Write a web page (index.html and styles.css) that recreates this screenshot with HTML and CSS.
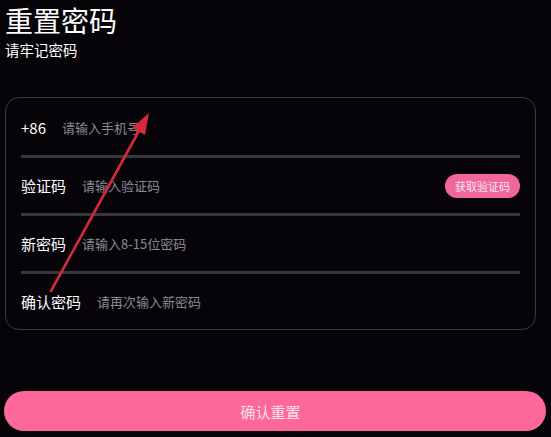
FILE: index.html
```html
<!DOCTYPE html>
<html lang="zh">
<head>
<meta charset="utf-8">
<link rel="stylesheet" href="styles.css">
</head>
<body>
<div class="page">
  <header class="head">
    <h1 class="title">重置密码</h1>
    <p class="subtitle">请牢记密码</p>
  </header>
  <section class="card">
    <div class="row first">
      <span class="label">+86</span>
      <span class="ph">请输入手机号</span>
    </div>
    <div class="divider"></div>
    <div class="row">
      <span class="label">验证码</span>
      <span class="ph">请输入验证码</span>
      <span class="code-btn">获取验证码</span>
    </div>
    <div class="divider"></div>
    <div class="row">
      <span class="label">新密码</span>
      <span class="ph">请输入8-15位密码</span>
    </div>
    <div class="divider"></div>
    <div class="row">
      <span class="label">确认密码</span>
      <span class="ph">请再次输入新密码</span>
    </div>
  </section>
  <div class="submit">确认重置</div>
  <svg class="arrow" width="551" height="437" viewBox="0 0 551 437">
    <line x1="51" y1="291" x2="140" y2="129" stroke="#d42a3c" stroke-width="2.6" stroke-linecap="round"/>
    <polygon points="149,113 145,135 132,128" fill="#d42a3c"/>
  </svg>
</div>
</body>
</html>
```
FILE: styles.css
```css
html, body {
  margin: 0;
  padding: 0;
  background: #060409;
}
body {
  font-family: "Noto Sans CJK SC", "Noto Sans", sans-serif;
  color: #ffffff;
}
.page {
  position: relative;
  width: 551px;
  height: 437px;
  overflow: hidden;
}
.head {
  padding: 2px 0 0 5px;
}
.title {
  margin: 0;
  font-size: 28px;
  font-weight: 400;
  line-height: 36px;
}
.subtitle {
  margin: 0;
  font-size: 14.5px;
  line-height: 24px;
}
.card {
  margin: 35px 0 0 5px;
  width: 531px;
  border: 1.5px solid #3a393e;
  border-radius: 14px;
  padding: 1px 15px 0;
  box-sizing: border-box;
}
.row {
  height: 55px;
  display: flex;
  align-items: center;
  gap: 16px;
}
.row.first {
  height: 56px;
}
.label {
  font-size: 15px;
  color: #ffffff;
}
.ph {
  font-size: 13px;
  color: #8b8a90;
  flex: 1;
}
.code-btn {
  background: #f2679a;
  color: #fbe4ee;
  font-size: 11px;
  line-height: 24px;
  height: 24px;
  padding: 0 10px;
  border-radius: 12px;
}
.divider {
  height: 3px;
  background: #38373c;
}
.submit {
  margin: 61px 0 0 4px;
  width: 542px;
  height: 40px;
  border-radius: 20px;
  background: #fe6799;
  color: #f8e1ea;
  font-size: 15px;
  display: flex;
  align-items: center;
  justify-content: center;
  padding-right: 9px;
  box-sizing: border-box;
}
.arrow {
  position: absolute;
  left: 0;
  top: 0;
  pointer-events: none;
}
```
